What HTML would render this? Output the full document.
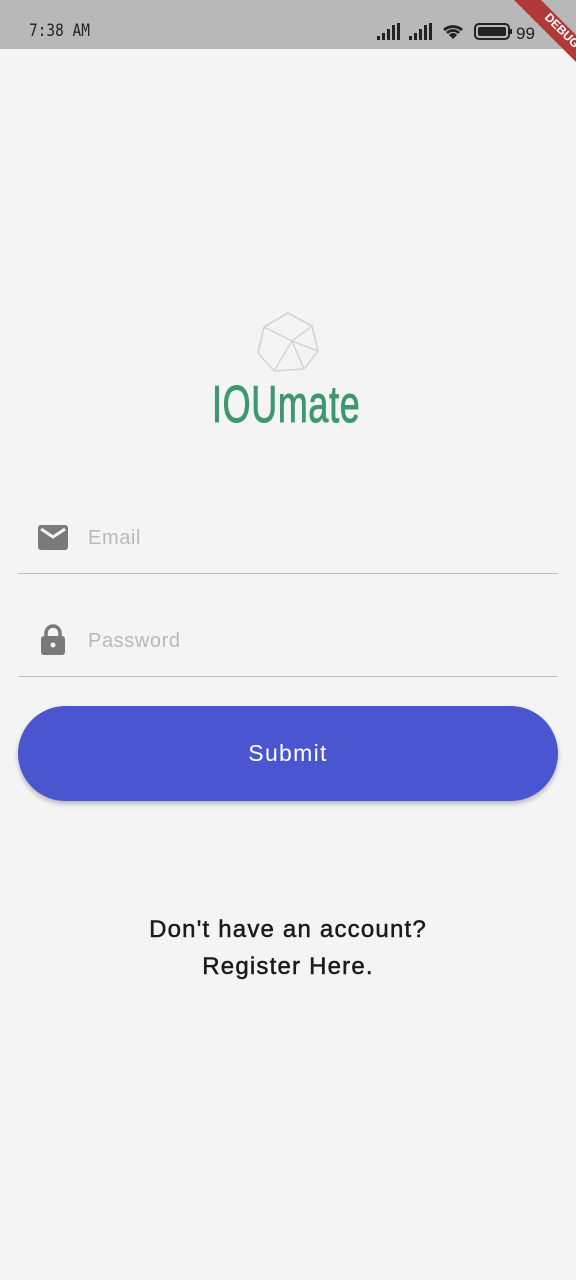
<!DOCTYPE html>
<html><head><meta charset="utf-8"><style>
body{margin:0;width:576px;height:1280px;background:#f4f4f4;font-family:"Liberation Sans",sans-serif;position:relative;overflow:hidden}
.sb{position:absolute;top:0;left:0;width:576px;height:49px;background:#b8b8b8}
.time{position:absolute;left:29px;top:21px;font-size:17px;color:#222;font-family:"DejaVu Sans Mono",monospace;transform:scaleX(.85);transform-origin:left}
.line{position:absolute;left:18px;width:540px;height:1px;background:#bdbdbd}
.ph{position:absolute;left:88px;font-size:20px;color:#b9b9b9;letter-spacing:.6px}
.btn{position:absolute;left:18px;top:706px;width:540px;height:95px;border-radius:48px;background:#4a56cf;box-shadow:0 3px 5px rgba(0,0,0,.25);color:#fff;font-size:23px;text-align:center;line-height:95px;letter-spacing:1.3px}
.reg{position:absolute;top:911px;left:0;width:576px;text-align:center;font-size:24px;color:#1a1a1a;line-height:37px;letter-spacing:1.2px;-webkit-text-stroke:.5px #1a1a1a}
.logo{position:absolute;left:212px;top:375px;font-size:52px;color:#3f9770;transform:scaleX(.69);transform-origin:left;letter-spacing:1px;-webkit-text-stroke:1px #3f9770}
</style></head><body>
<div class="sb"><div class="time">7:38 AM</div>
<svg style="position:absolute;left:376px;top:22px" width="170" height="20">
<g fill="#222"><rect x="1" y="14" width="3" height="4"/><rect x="6" y="11" width="3" height="7"/><rect x="11" y="7" width="3" height="11"/><rect x="16" y="3" width="3" height="15"/><rect x="21" y="1" width="3" height="17"/>
<rect x="33" y="14" width="3" height="4"/><rect x="38" y="11" width="3" height="7"/><rect x="43" y="7" width="3" height="11"/><rect x="48" y="3" width="3" height="15"/><rect x="53" y="1" width="3" height="17"/>
<path d="M67 7a15 15 0 0 1 20 0l-2 2a12 12 0 0 0-16 0z M70 10a10 10 0 0 1 14 0l-2 2a7 7 0 0 0-10 0z M73 13a5 5 0 0 1 8 0l-4 4z"/>
<rect x="99" y="2" width="34" height="15" rx="4" fill="none" stroke="#222" stroke-width="2"/><rect x="102" y="5" width="28" height="9" rx="2"/><rect x="134" y="7" width="2" height="5"/>
<text x="140" y="17" font-size="17" font-family="Liberation Sans">99</text></g></svg>
</div>
<svg style="position:absolute;right:0;top:0" width="80" height="80"><polygon points="18,0 45,0 80,35 80,62" fill="#b03a3a"/><text x="0" y="0" transform="translate(48,18) rotate(45)" font-size="12" font-weight="bold" fill="#fff" font-family="Liberation Sans">DEBUG</text></svg>
<svg style="position:absolute;left:254px;top:311px" width="70" height="64" fill="none" stroke="#d4d4d4" stroke-width="1.5">
<polygon points="34,2 58,15 64,40 50,58 20,60 4,42 10,16"/><path d="M10,16 L34,2 L58,15 L38,30 L10,16 M38,30 L64,40 M38,30 L20,60 M58,15 L64,40 M10,16 L4,42 M38,30 L50,58"/></svg>
<div class="logo">IOUmate</div>
<svg style="position:absolute;left:38px;top:525px" width="30" height="25"><rect x="0" y="0" width="30" height="25" rx="3" fill="#7a7a7a"/><path d="M3 4 L15 12 L27 4" stroke="#f4f4f4" stroke-width="3" fill="none"/></svg>
<div class="ph" style="top:527px">Email</div>
<div class="line" style="top:573px"></div>
<svg style="position:absolute;left:40px;top:624px" width="26" height="32"><path d="M6 13V9a7 7 0 0 1 14 0v4" stroke="#7a7a7a" stroke-width="3.5" fill="none"/><rect x="1" y="12" width="24" height="19" rx="3" fill="#7a7a7a"/><circle cx="13" cy="21" r="2.5" fill="#f4f4f4"/></svg>
<div class="ph" style="top:630px">Password</div>
<div class="line" style="top:676px"></div>
<div class="btn">Submit</div>
<div class="reg">Don't have an account?<br>Register Here.</div>
</body></html>
